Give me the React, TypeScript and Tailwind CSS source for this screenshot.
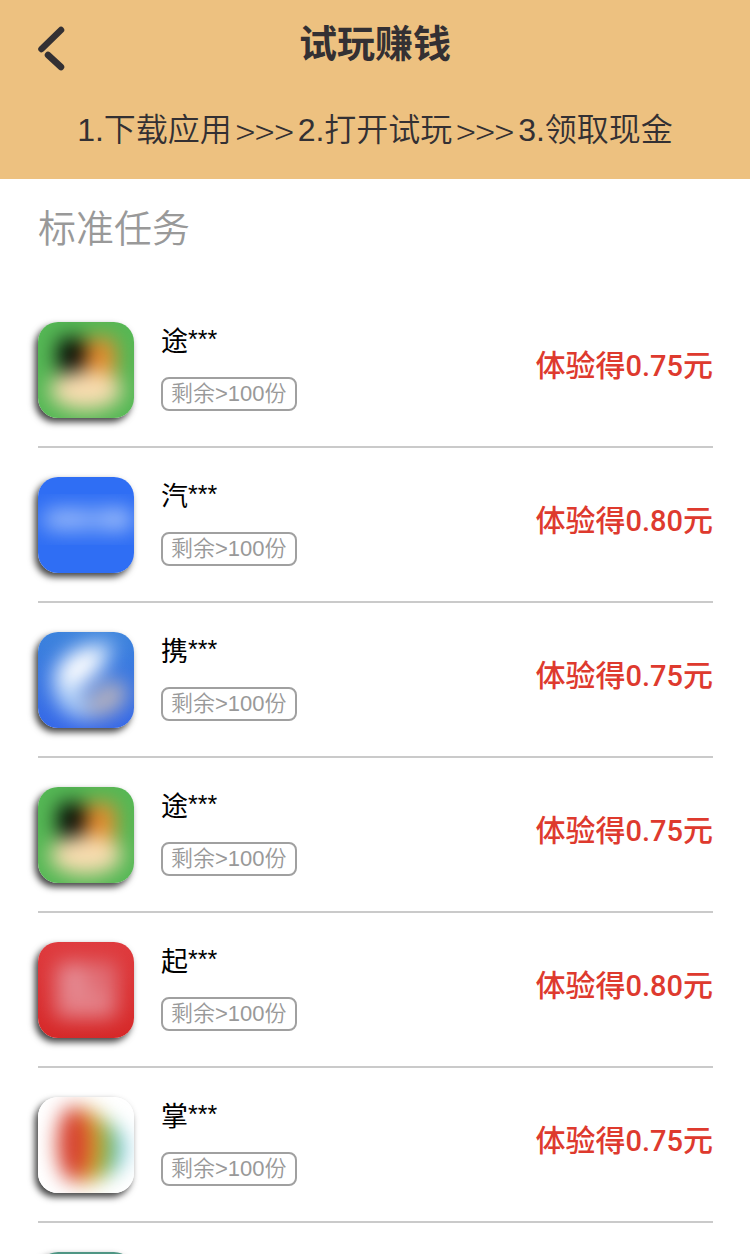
import type { ReactNode } from 'react'

type Task = {
  id: number
  icon: ReactNode
  initial?: string
  reward?: string
}

function IconFrame({ children }: { children: ReactNode }) {
  return (
    <svg viewBox="0 0 96 96" className="size-full" aria-hidden="true">
      <defs>
        <filter id="soft" x="-60%" y="-60%" width="220%" height="220%" colorInterpolationFilters="sRGB">
          <feGaussianBlur stdDeviation="10" />
        </filter>
        <linearGradient id="sky" x1="0" y1="0" x2="0" y2="1">
          <stop offset="0" stopColor="#3c83dc" />
          <stop offset="1" stopColor="#3568e8" />
        </linearGradient>
        <linearGradient id="crimson" x1="0" y1="0" x2="0" y2="1">
          <stop offset="0" stopColor="#df3b3e" />
          <stop offset="1" stopColor="#d62828" />
        </linearGradient>
      </defs>
      {children}
    </svg>
  )
}

const travelIcon = (
  <IconFrame>
    <rect width="96" height="96" fill="#55b855" />
    <g filter="url(#soft)">
      <rect x="46" y="16" width="32" height="40" rx="8" fill="#e58a2c" />
      <rect x="20" y="16" width="27" height="36" rx="8" fill="#000000" />
      <ellipse cx="48" cy="68" rx="36" ry="20" fill="#f8dcb0" />
    </g>
  </IconFrame>
)

const carIcon = (
  <IconFrame>
    <rect width="96" height="96" fill="#2f6ef4" />
    <g filter="url(#soft)">
      <rect x="4" y="31" width="92" height="23" rx="8" fill="#7ca6f8" />
      <ellipse cx="30" cy="42" rx="17" ry="9" fill="#98b9f9" />
      <ellipse cx="78" cy="42" rx="14" ry="11" fill="#9cbcf9" />
    </g>
  </IconFrame>
)

const tripIcon = (
  <IconFrame>
    <rect width="96" height="96" fill="url(#sky)" />
    <g filter="url(#soft)">
      <path d="M76 10C38 8 12 28 15 54C18 76 34 90 58 86C44 72 40 62 48 52C60 42 74 30 76 10Z" fill="#b9d6f8" />
      <ellipse cx="42" cy="35" rx="25" ry="14" transform="rotate(-38 42 35)" fill="#ffffff" />
      <ellipse cx="69" cy="67" rx="23" ry="15" transform="rotate(-38 69 67)" fill="#b4b1be" />
    </g>
  </IconFrame>
)

const redIcon = (
  <IconFrame>
    <rect width="96" height="96" fill="url(#crimson)" />
    <g filter="url(#soft)">
      <rect x="16" y="19" width="64" height="58" rx="8" fill="#e06d74" />
      <ellipse cx="36" cy="37" rx="13" ry="15" fill="#e58d95" />
      <rect x="22" y="52" width="50" height="20" fill="#e5858c" />
    </g>
  </IconFrame>
)

const playIcon = (
  <IconFrame>
    <rect width="96" height="96" fill="#ffffff" />
    <g filter="url(#soft)">
      <ellipse cx="65" cy="52" rx="23" ry="27" fill="#7cc8e2" />
      <ellipse cx="58" cy="51" rx="17" ry="32" fill="#6cb83c" />
      <ellipse cx="49" cy="49" rx="16" ry="38" fill="#dda02c" />
      <ellipse cx="35" cy="47" rx="16" ry="38" fill="#d6402e" />
    </g>
  </IconFrame>
)

const tealIcon = (
  <IconFrame>
    <rect width="96" height="96" fill="#4f9684" />
  </IconFrame>
)

const tasks: Task[] = [
  { id: 1, icon: travelIcon, initial: '途', reward: '0.75' },
  { id: 2, icon: carIcon, initial: '汽', reward: '0.80' },
  { id: 3, icon: tripIcon, initial: '携', reward: '0.75' },
  { id: 4, icon: travelIcon, initial: '途', reward: '0.75' },
  { id: 5, icon: redIcon, initial: '起', reward: '0.80' },
  { id: 6, icon: playIcon, initial: '掌', reward: '0.75' },
  { id: 7, icon: tealIcon },
]

function Arrows() {
  return <span className="mx-1 font-['Noto_Sans_CJK_SC',sans-serif] text-[36px] font-light">&gt;&gt;&gt;</span>
}

function TaskRow({ task }: { task: Task }) {
  return (
    <li className="flex items-start border-b-2 border-[#cacaca] pt-[29px] pb-7">
      <div className="size-24 shrink-0 rounded-[20px] shadow-[-3px_4px_7px_rgba(0,0,0,0.75)]">
        <div className="size-full overflow-hidden rounded-[20px]">{task.icon}</div>
      </div>
      {task.initial && (
        <div className="ml-[27px] flex flex-1 flex-col items-start">
          <h3 className="flex items-start text-[27px] leading-10 text-black">
            {task.initial}
            <span className="text-[25px] leading-[34px]">***</span>
          </h3>
          <span className="mt-[15px] rounded-lg border-2 border-[#a0a0a0] px-2 text-[22px] leading-[30px] font-[350] text-[#999999]">
            剩余&gt;100份
          </span>
        </div>
      )}
      {task.reward && (
        <p className="pt-[22px] text-[30px] leading-[44px] font-medium text-[#de3a2e]">
          体验得
          <span className="font-[Roboto,sans-serif] text-[29px]">{task.reward}</span>
          元
        </p>
      )}
    </li>
  )
}

export default function App() {
  return (
    <div className="flex h-screen flex-col bg-white font-['Liberation_Sans','Noto_Sans_CJK_SC',sans-serif]">
      <header className="shrink-0 bg-[#edc180] pb-6 text-[#333033]">
        <div className="grid grid-cols-[1fr_auto_1fr] items-center px-[37px] pt-4">
          <button type="button" aria-label="返回" className="justify-self-start pt-2">
            <svg width="28" height="46" viewBox="0 0 28 46" fill="none" stroke="currentColor" strokeWidth="6.5" strokeLinecap="round">
              <path d="M24 5L4.500 24" />
              <path d="M11 30L24 42" />
            </svg>
          </button>
          <h1 className="text-[38px] leading-[56px] font-bold">试玩赚钱</h1>
        </div>
        <p className="mt-[33px] flex items-center justify-center text-[32px] leading-[50px] font-[350] whitespace-nowrap">
          1.下载应用
          <Arrows />
          2.打开试玩
          <Arrows />
          3.领取现金
        </p>
      </header>
      <main className="min-h-0 flex-1 overflow-y-auto pr-[37px] pl-[38px] [scrollbar-width:none]">
        <h2 className="mt-[22px] text-[38px] leading-[56px] font-[350] text-[#999999]">标准任务</h2>
        <ul className="mt-9">
          {tasks.map((task) => (
            <TaskRow key={task.id} task={task} />
          ))}
        </ul>
      </main>
    </div>
  )
}
